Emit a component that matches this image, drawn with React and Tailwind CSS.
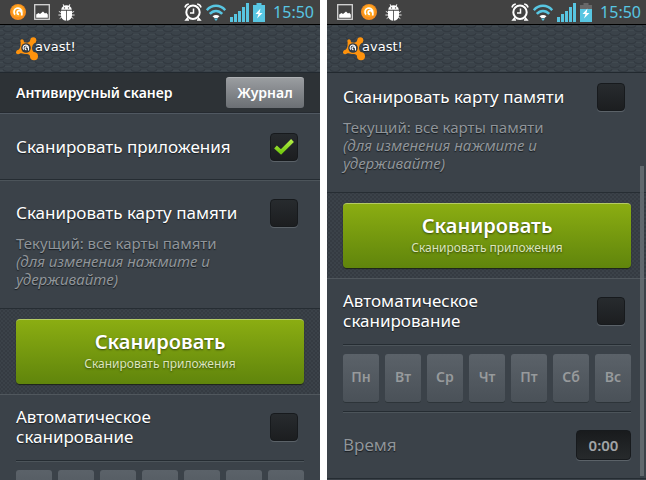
import { useId, useState } from 'react'

const DAYS = ['Пн', 'Вт', 'Ср', 'Чт', 'Пт', 'Сб', 'Вс']

function AvastBall() {
  return (
    <svg className="size-4" viewBox="0 0 16 16" aria-hidden="true">
      <circle cx="8" cy="8" r="8" fill="#f78f1e" />
      <circle cx="8" cy="7" r="6" fill="#ffa61f" />
      <path d="M5 10.600A3.900 3.900 0 1 1 11.800 8.200V11.500M11 8.500A1.900 1.900 0 1 0 9 10.400" fill="none" stroke="#fff" strokeWidth="1.700" />
    </svg>
  )
}

function PictureIcon() {
  return (
    <svg className="size-4" viewBox="0 0 16 16" aria-hidden="true">
      <rect x=".7" y=".7" width="14.6" height="14.6" fill="none" stroke="#d6d6d6" strokeWidth="1.3" />
      <path d="M2.2 13.8v-3.2L4.5 9 6 10l3-2.6 2 2 1.2-.6 1.6 1.6v3.4z" fill="#fff" />
    </svg>
  )
}

function BugIcon() {
  return (
    <svg className="h-[17px] w-[17px]" viewBox="0 0 17 17" aria-hidden="true">
      <path d="M6 2.500 5.200.3M11 2.500l.8-2.200" fill="none" stroke="#fff" />
      <path d="M3 8.500 1.200 7.600M14 8.500l1.800-.9M3 11H.8M14 11h2.200M3.500 13.300l-1.500 1M13.500 13.300l1.500 1" fill="none" stroke="#e6e6e6" strokeLinecap="round" />
      <path d="M3.200 5.700C3.500 3 5.800 1.300 8.500 1.300S13.500 3 13.800 5.700z" fill="#fff" />
      <path d="M3 6.800h5.100v10C4.900 16.600 3 14.500 3 11.600zM8.900 6.800H14v4.800c0 2.900-1.900 5-5.100 5.200z" fill="#fff" />
      <circle cx="6.500" cy="3.900" r=".7" fill="#424242" />
      <circle cx="10.500" cy="3.900" r=".7" fill="#424242" />
    </svg>
  )
}

function AlarmIcon() {
  return (
    <svg className="h-[18px] w-[18px]" viewBox="0 0 18 18" fill="none" stroke="#fff" aria-hidden="true">
      <circle cx="9" cy="9.3" r="6.7" strokeWidth="2" />
      <path d="M9.500 5.500V10H6" strokeWidth="1.500" />
      <path d="M1 4.500C1.400 2.500 2.700 1.300 4.800 1M17 4.500C16.600 2.500 15.300 1.300 13.200 1M4 14.500 2 17h3M14 14.500 16 17h-3" strokeWidth="1.600" />
    </svg>
  )
}

function WifiIcon() {
  return (
    <svg className="h-[17px] w-5" viewBox="0 0 20 17" fill="none" stroke="#58c6e2" strokeWidth="2.500" aria-hidden="true">
      <path d="M.8 6.200C5.800.4 14.200.4 19.200 6.200" />
      <path d="M3.800 9.800c3.500-3.900 8.900-3.900 12.400 0" />
      <path d="M6.500 12.200c2-1.700 5-1.700 7 0L11.500 14h-3z" fill="#fff" stroke="none" />
      <path d="M8 14.500 10 17l2-2.500z" fill="#58c6e2" stroke="none" />
    </svg>
  )
}

function SignalIcon() {
  return (
    <svg className="h-[19px] w-[19px]" viewBox="0 0 19 19" fill="#58c6e2" aria-hidden="true">
      <path d="M0 14h3v5H0zM4 11h3v8H4zM8 8h3v11H8zM12 4h3v15h-3zM16 0h3v19h-3z" />
    </svg>
  )
}

function BatteryIcon({ low }) {
  return (
    <svg className="h-[19px] w-3" viewBox="0 0 12 19" aria-hidden="true">
      <path d="M3.500 0h5v2H12v17H0V2h3.500z" fill={low ? '#686868' : '#58c6e2'} />
      {low && <path d="M0 6h12v13H0z" fill="#58c6e2" />}
      <path d="M7.500 5.500 2.500 11h3L4 15.500 9.500 10h-3z" fill="#fff" />
    </svg>
  )
}

function StatusBar({ imageFirst, low }) {
  return (
    <div className="flex h-[25px] shrink-0 items-center justify-between border-b border-black bg-[#424242] pr-1.5 pl-2.5">
      <div className="flex items-center gap-2">
        {imageFirst ? <><PictureIcon /><AvastBall /></> : <><AvastBall /><PictureIcon /></>}
        <BugIcon />
      </div>
      <div className="flex items-center gap-1">
        <AlarmIcon />
        <WifiIcon />
        <SignalIcon />
        <BatteryIcon low={low} />
        <span className="pl-1 text-base text-[#58c6e2] text-shadow-none">15:50</span>
      </div>
    </div>
  )
}

function Header() {
  const id = useId()
  return (
    <header className="relative h-12 shrink-0 border-b border-[#22292f] bg-[#3b434a] px-4 py-3">
      <svg className="absolute inset-0 h-full w-full" aria-hidden="true">
        <defs>
          <pattern id={id} width="16" height="8" patternUnits="userSpaceOnUse">
            <path d="M3 4c1 3.500 9 3.500 10 0M-5 0c1 3.500 9 3.500 10 0M11 0c1 3.500 9 3.500 10 0" fill="none" stroke="#333a41" strokeWidth="1.300" />
            <path d="M5 1.500h6M-3 5.500h6M13 5.500h6" stroke="#434b52" strokeWidth=".8" />
          </pattern>
        </defs>
        <rect width="100%" height="100%" fill={`url(#${id})`} />
      </svg>
      <div className="relative flex h-6 items-center">
        <svg className="h-6 w-[23px]" viewBox="0 0 23 24" aria-hidden="true">
          <g fill="#ff930d">
            <path d="M9 5.500C12 6 14 5 14.500 3L20 5c-1.500 1.500-3.500 2-4 6 0 3 2 4.500 4 5l-5 5.500c-.5-3-2-5-6-4.500C6 16.500 4.500 15.500 2.500 17L1 13.500C3.500 13 4 11 4.500 9c.3-2 0-3 .3-4.500l2.700-.7C7.500 5 8 5.500 9 5.500z" />
            <circle cx="17.300" cy="3.200" r="3" />
            <circle cx="18" cy="19.300" r="4" />
            <circle cx="2" cy="15.300" r="2" />
            <circle cx="6" cy="4" r="1.700" />
          </g>
          <circle cx="10" cy="11" r="4.800" fill="#343b42" />
          <path d="M7.800 12.600A2.700 2.700 0 1 1 12.500 11v2.600M12 11.200a1.500 1.500 0 1 0-1.500 1.500" fill="none" stroke="#fff" strokeWidth="1.100" />
        </svg>
        <span className="-ml-1 pb-1 font-['DejaVu_Sans',sans-serif] text-[13px] leading-5 text-white">avast!</span>
      </div>
    </header>
  )
}

function Check({ id, defaultChecked = false }) {
  const [checked, setChecked] = useState(defaultChecked)
  const gradient = useId()
  return (
    <span className="mr-1.5 grid size-7 shrink-0">
      <input
        id={id}
        type="checkbox"
        checked={checked}
        onChange={e => setChecked(e.target.checked)}
        className="col-start-1 row-start-1 size-7 appearance-none rounded-sm border border-[#171a1d] bg-linear-to-b from-[#272b2e] to-[#1c1e20] shadow-[0_1px_0_#5b6268]"
      />
      {checked && (
        <svg className="pointer-events-none col-start-1 row-start-1 size-7" viewBox="0 0 28 28" aria-hidden="true">
          <linearGradient id={gradient} x2="0" y2="1">
            <stop stopColor="#b2ed45" />
            <stop offset="1" stopColor="#76cb12" />
          </linearGradient>
          <path d="m5.500 14 5.500 5L22.500 7.500" fill="none" stroke={`url(#${gradient})`} strokeWidth="4" />
        </svg>
      )}
    </span>
  )
}

function CardScan({ className }) {
  const id = useId()
  return (
    <section className={`px-4 ${className}`}>
      <div className="flex items-center justify-between">
        <label htmlFor={id} className="text-[17px] leading-5">Сканировать карту памяти</label>
        <Check id={id} />
      </div>
      <p className="mt-[7px] w-60 text-[15px] leading-[18px] text-[#90959a]">
        Текущий: все карты памяти<br />
        <em>(для изменения нажмите и удерживайте)</em>
      </p>
    </section>
  )
}

function ScanButton() {
  const id = useId()
  return (
    <div className="relative shrink-0 border-y border-t-[#262d33] border-b-[#50575d] px-4 py-2.5">
      <svg className="absolute inset-0 h-full w-full" aria-hidden="true">
        <pattern id={id} width="4" height="4" patternUnits="userSpaceOnUse">
          <path d="m0 0 4 4M4 0 0 4" stroke="#333a40" strokeWidth=".8" />
        </pattern>
        <rect width="100%" height="100%" fill={`url(#${id})`} />
      </svg>
      <button className="relative flex h-[65px] w-full flex-col items-center justify-center rounded-sm border-t border-[#b5cb65] bg-linear-to-b from-[#8bad12] to-[#60850c] shadow-[0_1px_1px_#1d2418] text-shadow-[0_1px_2px_#35480a]">
        <span className="text-xl leading-6 font-semibold">Сканировать</span>
        <span className="text-xs leading-5 text-[#dce5bd]">Сканировать приложения</span>
      </button>
    </div>
  )
}

function AutoScan() {
  const id = useId()
  return (
    <section className="px-4">
      <div className="flex h-[65px] items-center justify-between pb-0.5">
        <label htmlFor={id} className="w-44 text-[17px] leading-5">Автоматическое сканирование</label>
        <Check id={id} />
      </div>
      <div className="grid grid-cols-7 gap-1.5 border-y border-[#252c32] py-[9px] shadow-[inset_0_1px_0_#4c545a,0_1px_0_#4c545a]">
        {DAYS.map(day => (
          <button key={day} className="h-12 rounded-[3px] bg-linear-to-b from-[#5b6269] to-[#4a5158] pb-0.5 text-sm font-semibold text-[#979a9c] shadow-[0_1px_0_#2d3439]">
            {day}
          </button>
        ))}
      </div>
    </section>
  )
}

function TimeRow() {
  const id = useId()
  return (
    <div className="flex h-[67px] shrink-0 items-center justify-between border-b border-[#252c32] px-4 text-[#90959a]">
      <label htmlFor={id} className="text-[17px]">Время</label>
      <button id={id} className="h-[30px] w-[55px] rounded-sm border border-[#171a1d] bg-linear-to-b from-[#191b1d] to-[#272a2c] text-[15px] leading-5 font-semibold text-[#a1a4a6] shadow-[0_1px_0_#5b6268]">
        0:00
      </button>
    </div>
  )
}

function ScannerTop() {
  const id = useId()
  return (
    <>
      <div className="flex h-10 shrink-0 items-center justify-between border-b border-[#252a30] bg-[#2d3236] px-4">
        <h1 className="text-sm font-semibold">Антивирусный сканер</h1>
        <button className="h-[31px] w-[78px] rounded-[3px] border-t border-[#aeb1b4] bg-linear-to-b from-[#9a9da0] to-[#6b6f74] text-sm font-semibold">Журнал</button>
      </div>
      <section className="flex h-[67px] shrink-0 items-center justify-between border-y border-t-[#505861] border-b-[#252c32] px-4">
        <label htmlFor={id} className="text-[17px] leading-5">Сканировать приложения</label>
        <Check id={id} defaultChecked />
      </section>
    </>
  )
}

const screen = "relative flex h-screen min-w-0 flex-col overflow-hidden bg-[#3b4249] font-['Noto_Sans',sans-serif] text-white text-shadow-[0_1px_1px_#171c20]"

export default function App() {
  return (
    <div className="overflow-hidden bg-white">
      <main className="-mr-px grid grid-cols-2 gap-[7px]">
        <div className={screen}>
          <StatusBar />
          <Header />
          <ScannerTop />
          <CardScan className="border-t border-[#4c545a] pt-[18px] pb-5" />
          <ScanButton />
          <AutoScan />
        </div>
        <div className={screen}>
          <StatusBar imageFirst low />
          <Header />
          <CardScan className="pt-2.5 pb-5" />
          <ScanButton />
          <AutoScan />
          <TimeRow />
          <div className="absolute top-[166px] right-[3px] bottom-1 w-1 bg-[#6c7277]/80" />
        </div>
      </main>
    </div>
  )
}
